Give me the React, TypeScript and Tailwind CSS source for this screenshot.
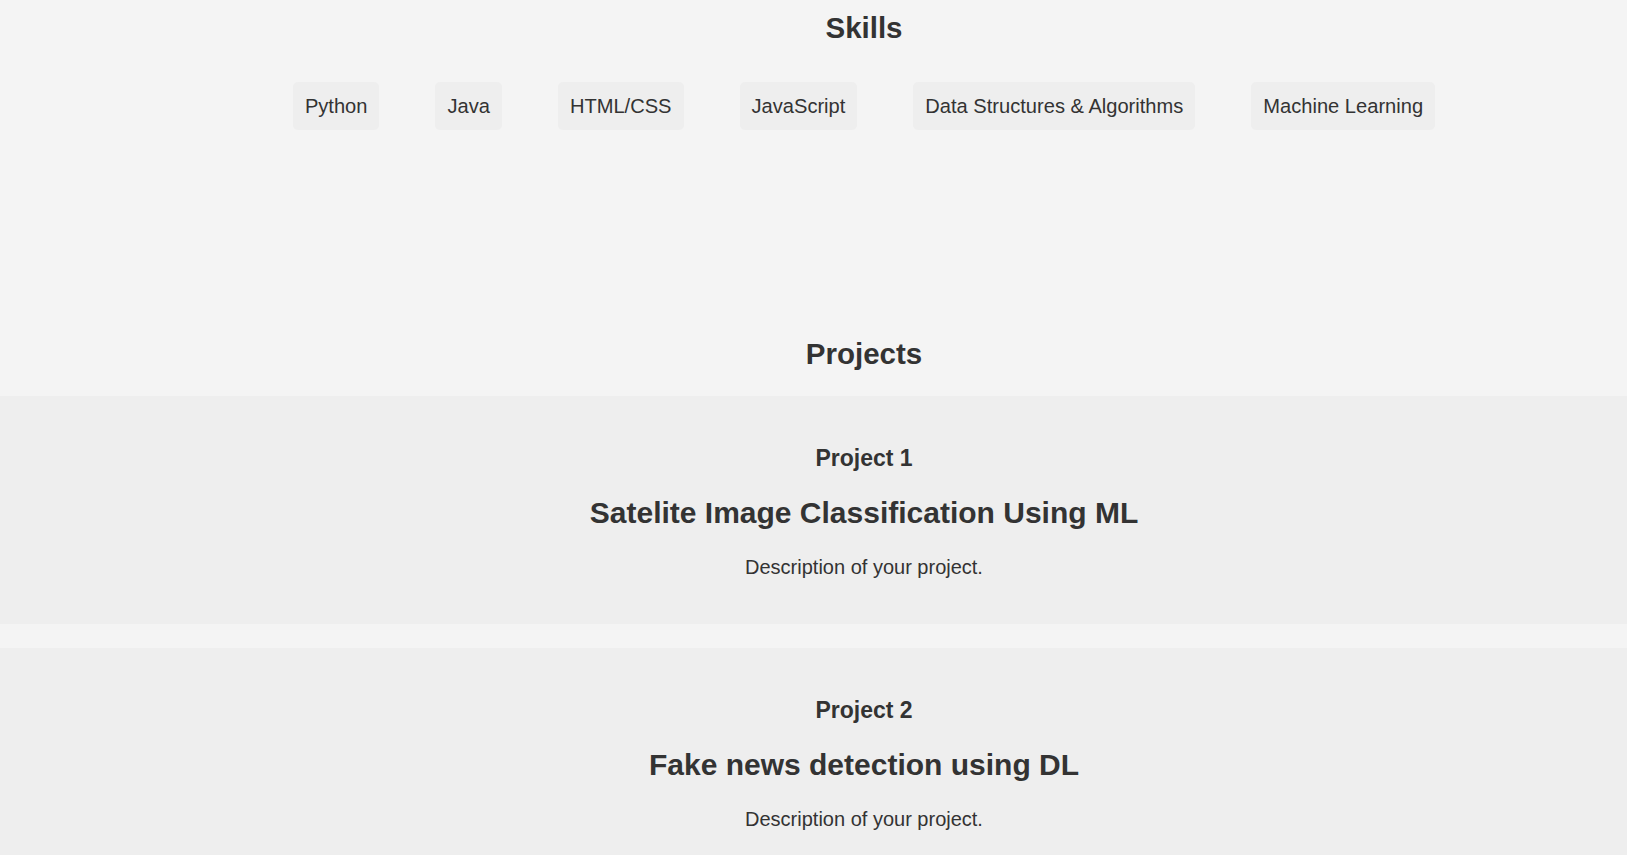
import React from 'react';

const skills = ['Python', 'Java', 'HTML/CSS', 'JavaScript', 'Data Structures & Algorithms', 'Machine Learning'];

const projects = [
  { label: 'Project 1', title: 'Satelite Image Classification Using ML', desc: 'Description of your project.' },
  { label: 'Project 2', title: 'Fake news detection using DL', desc: 'Description of your project.' },
];

export default function App() {
  return (
    <div className="min-h-screen bg-[#f4f4f4] text-[#333333] font-['Liberation_Sans',Arial,sans-serif] overflow-hidden">
      {/* Skills */}
      <section className="pt-[11px] pl-[101px]">
        <h2 className="text-center text-[29.5px] leading-[33px] font-bold">Skills</h2>
        <ul className="mt-[38px] flex justify-center gap-[56px]">
          {skills.map((skill) => (
            <li
              key={skill}
              className="h-[48px] px-3 flex items-center rounded-[5px] bg-[#eeeeee] text-[20.1px] leading-[23px]"
            >
              {skill}
            </li>
          ))}
        </ul>
      </section>

      {/* Projects */}
      <section className="mt-[207px]">
        <h2 className="pl-[101px] text-center text-[29.5px] leading-[33px] font-bold">Projects</h2>
        <div className="mt-[26px] flex flex-col gap-[24px]">
          {projects.map((p) => (
            <div key={p.label} className="bg-[#eeeeee] pl-[101px] pt-[49px] pb-[45px] text-center">
              <h3 className="text-[23px] leading-[26px] font-bold">{p.label}</h3>
              <h2 className="mt-[25px] text-[30px] leading-[34px] font-bold">{p.title}</h2>
              <p className="mt-[26px] text-[20px] leading-[23px]">{p.desc}</p>
            </div>
          ))}
        </div>
      </section>
    </div>
  );
}
